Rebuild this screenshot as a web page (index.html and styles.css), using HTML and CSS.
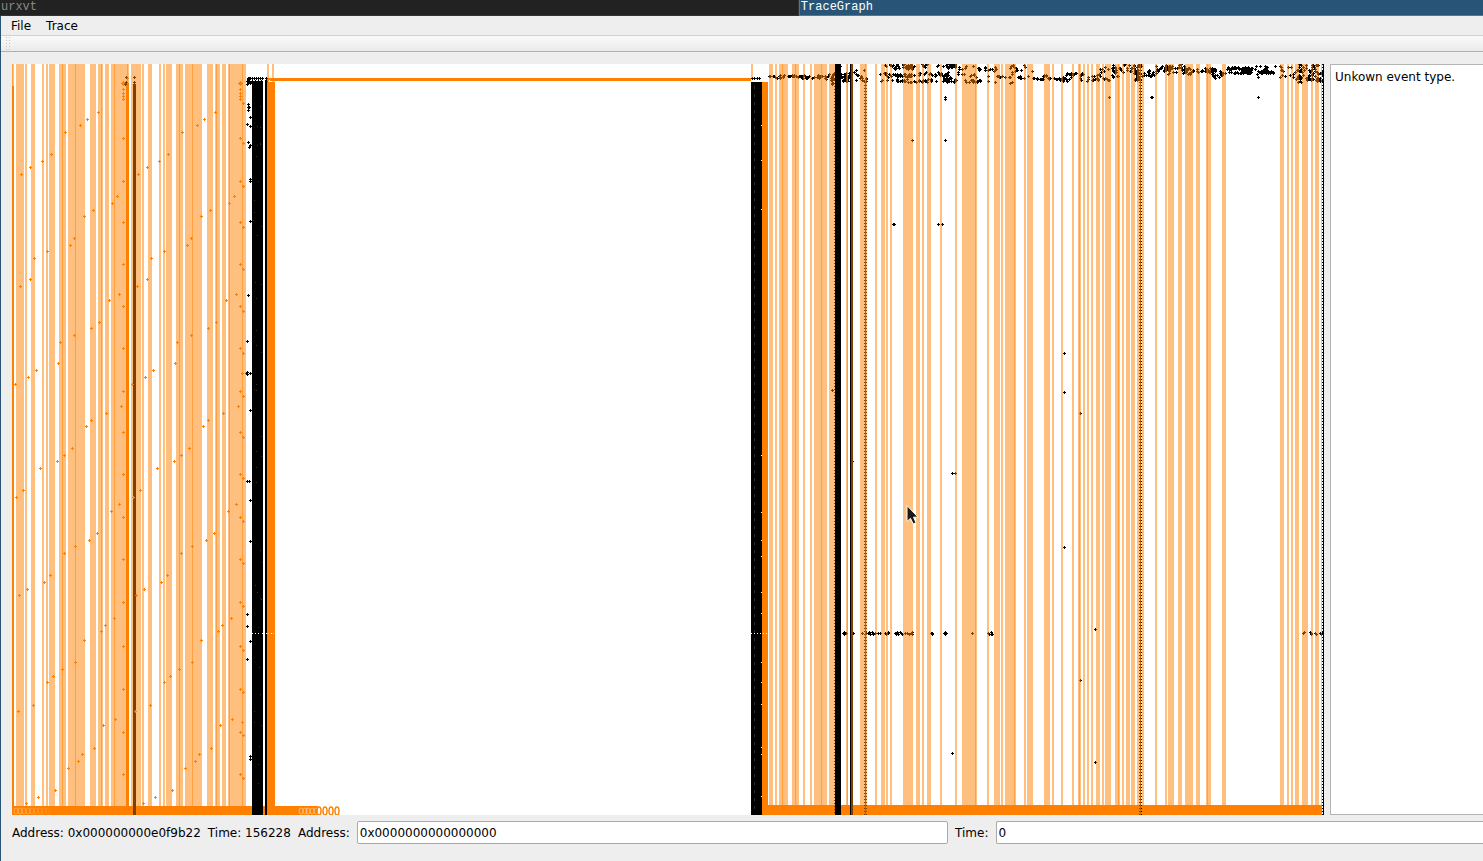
FILE: index.html
```html
<!DOCTYPE html>
<html lang="en">
<head>
<meta charset="utf-8">
<title>TraceGraph</title>
<link rel="stylesheet" href="styles.css">
</head>
<body>
<header class="tabs">
  <div class="tab">urxvt</div>
  <div class="tab tab-active">TraceGraph</div>
</header>
<div class="window">
  <nav class="menubar">
    <button class="menu" type="button">File</button>
    <button class="menu" type="button">Trace</button>
  </nav>
  <div class="toolbar"><span class="grip"></span></div>
  <main class="content">
    <svg class="plot" id="plot" viewBox="12 64 1312 751" preserveAspectRatio="none" shape-rendering="crispEdges" role="img" aria-label="Trace graph"></svg>
    <section class="events">Unkown event type.</section>
  </main>
  <footer class="status">
    <span>Address: 0x000000000e0f9b22</span>
    <span>Time: 156228</span>
    <label for="address">Address:</label>
    <input class="field field-address" id="address" type="text" value="0x0000000000000000">
    <label for="time">Time:</label>
    <input class="field field-time" id="time" type="text" value="0">
  </footer>
</div>
<script src="plot.js"></script>
</body>
</html>
```
FILE: styles.css
```css
* { box-sizing: border-box; }

body {
  margin: 0;
  height: 100vh;
  display: flex;
  flex-direction: column;
  overflow: hidden;
  background: #eeeeee;
  color: #000000;
  font: 12px/16px "DejaVu Sans", sans-serif;
}

.tabs {
  display: flex;
  flex: none;
  height: 16px;
  font: 12px/15px "Liberation Mono", monospace;
}

.tab {
  flex: 799;
  min-width: 0;
  padding-left: 1px;
  background: #222222;
  border-bottom: 1px solid #333333;
  border-right: 1px solid #333333;
  color: #888888;
}

.tab-active {
  flex: 684;
  background: #285577;
  border-left: 1px solid #4c7899;
  border-right: 0;
  border-bottom-color: #4c7899;
  color: #ffffff;
}

.window {
  flex: 1;
  min-height: 0;
  display: flex;
  flex-direction: column;
  border-left: 1px solid #285577;
}

.menubar {
  display: flex;
  flex: none;
  gap: 1px;
  height: 19px;
  padding-left: 3px;
}

.menu {
  padding: 0 7px;
  border: 0;
  background: none;
  color: inherit;
  font: inherit;
}

.toolbar {
  flex: none;
  height: 17px;
  padding: 1px 5px;
  border-top: 1px solid #d0d0d0;
  border-bottom: 1px solid #b0b0b0;
  background: linear-gradient(#f9f9f9, #ebebeb);
}

.grip {
  display: block;
  width: 5px;
  height: 14px;
  background: linear-gradient(#c4c4c4, #c4c4c4) 0 0 / 1px 100% no-repeat, linear-gradient(#c4c4c4, #c4c4c4) 3px 0 / 1px 100% no-repeat;
  -webkit-mask: repeating-linear-gradient(#000000 0 1px, transparent 1px 3px);
  mask: repeating-linear-gradient(#000000 0 1px, transparent 1px 3px);
}

.content {
  flex: 1;
  min-height: 0;
  display: flex;
  gap: 6px;
  padding: 12px 0 0 11px;
}

.plot {
  flex: 1;
  min-width: 0;
  height: 100%;
  display: block;
  background: #ffffff;
}

.events {
  flex: none;
  width: 153px;
  padding: 4px;
  border: 1px solid #b4b4b4;
  border-right: 0;
  background: #ffffff;
}

.status {
  flex: none;
  display: flex;
  align-items: center;
  gap: 7px;
  padding: 6px 0 17px 11px;
  white-space: nowrap;
}

.field {
  min-width: 0;
  height: 23px;
  padding: 0 2px;
  border: 1px solid #aaaaaa;
  border-radius: 2px;
  background: #ffffff;
  color: inherit;
  font: inherit;
}

.field-address { flex: 592; }

.field-time {
  flex: 488;
  border-right: 0;
  border-radius: 2px 0 0 2px;
}
```
FILE: plot.js
```js
const svg = document.getElementById("plot");
const TOP = 64, BOTTOM = 815;

function add(name, attrs) {
  const el = document.createElementNS("http://www.w3.org/2000/svg", name);
  for (const key in attrs) el.setAttribute(key, attrs[key]);
  svg.appendChild(el);
}
function bars(list, fill, opacity) {
  const d = list.map(([a, b, y0 = TOP, y1 = BOTTOM]) => `M${a},${y0}H${b}V${y1}H${a}z`).join("");
  add("path", { d, fill, "fill-opacity": opacity || 1 });
}
function marks(list, fill) {
  add("path", { fill, "fill-rule": "nonzero", d: list.map(([x, y]) => `M${x - 1},${y}h3v1h-3zM${x},${y - 1}h1v3h-1z`).join("") });
}
const column = (x, y0, y1, step) => {
  const out = [];
  for (let y = y0; y < y1; y += step) out.push([x, y]);
  return out;
};
let seed = 7;
const random = () => (seed = (seed * 16807) % 2147483647) / 2147483647;
const scatter = (x0, x1, y0, y1, n) => {
  const out = [];
  for (let i = 0; i < n; i++) out.push([Math.round(x0 + random() * (x1 - x0)), Math.round(y0 + random() * (y1 - y0))]);
  return out;
};
const pairs = text => text.trim().split(/\s+/).map(p => p.split(",").map(Number));

/* memory accesses that repeat once per loop pass */
const loop = pairs(`21,174 30,167 42,161 51,154 65,132 80,125 87,119 98,112 117,196 112,203 93,210 84,216
74,238 70,245 47,251 34,258 30,279 20,286 119,294 109,300 99,322 91,328 74,335 60,342 58,363 36,370 28,377 15,384
121,406 106,413 91,420 86,426 72,448 64,455 57,461 40,468 23,490 16,497 119,504 111,511 97,533 89,540 75,546 64,553
50,575 44,582 27,589 19,595 114,618 105,625 101,631 84,640 75,662 62,669 53,676 47,682 33,705 18,711 115,719 103,725
94,748 82,754 78,761 68,768 55,790 38,797 26,803
123,82 122,83 123,84 124,83 123,89 123,93 123,96 123,99 123,138 123,181 123,222 123,264 123,306 123,348 123,391
123,432 123,474 123,517 123,559 123,602 123,646 123,689 123,732 123,774`);
const secondPass = loop.map(([x, y]) => [x + 117, y]);
const edge = pairs(`243,103 243,143 243,186 243,227 243,269 243,311 243,353 243,396 243,437 243,478 243,521 243,563
243,606 243,650 243,692 243,735 243,778 242,373 242,722 127,78`);

/* solid columns */
bars([[12, 14, 86], [126, 129, 83], [267, 275, 82], [762, 768, 82], [267, 751, 78, 81], [12, 300, 806], [762, 1322, 805]], "#ff8000");
bars([[133, 136, 84], [252, 263, 82], [265, 267, 80], [751, 762, 82], [835, 841], [850, 853]], "#000000");
marks(loop.concat(secondPass, edge), "#ff8000");

/* single black events */
marks(pairs(`126,77 126,82 125,84 134,77 134,82 248,104 248,107 249,107 248,110 250,117 247,124 250,126 248,142 250,145 249,147
250,179 250,181 250,221 248,295 247,341 246,373 247,372 247,374 250,373 250,410 247,481 249,481 250,500 250,541
247,614 247,626 250,641 247,659 250,756 250,759 945,97 945,99 912,140 945,140 893,224 894,224 938,224 942,224
1109,97 1152,97 1151,97 1258,97 1064,353 1064,392 1080,413 952,473 955,473 1064,547 1095,629 1080,680 1095,762
952,753 832,390 852,461
843,633 844,632 844,634 846,633 853,633 862,633 866,633 868,633 869,632 870,634 872,632 873,634 875,633 878,633 880,633
885,633 886,634 888,632 888,633 895,633 896,634 897,632 898,634 900,632 901,633 902,634 905,633 907,633 909,634 911,633 912,632 912,634
931,633 932,633 932,634 944,633 945,632 945,634 946,633 972,633 988,633 989,634 991,632 991,634 992,634
1303,633 1304,632 1310,632 1311,633 1311,634 1315,633 1316,634 1320,633 1321,634 1322,633 1323,634`)
.concat(
  column(865, 82, 815, 3), column(1140, 64, 815, 3), column(1323, 64, 815, 3), column(835, 80, 815, 3),
  scatter(247, 250, 78, 84, 14), column(0, 0, 1, 1), [248, 250, 252, 254, 256, 258, 260, 262, 266].map(x => [x, 78]),
  [252, 255, 258, 261, 266].map(x => [x, 81]),
  [752, 754, 757, 759].map(x => [x, 78]),
  scatter(768, 781, 75, 78, 13), scatter(781, 802, 75, 77, 17), scatter(802, 828, 75, 78, 22), scatter(825, 834, 74, 79, 9),
  scatter(832, 850, 73, 81, 50), scatter(831, 834, 80, 84, 5), scatter(850, 867, 69, 81, 16), scatter(833, 841, 64, 67, 4),
  scatter(885, 915, 64, 68, 25), scatter(920, 957, 64, 67, 25), scatter(895, 917, 66, 69, 14), scatter(943, 955, 66, 68, 7),
  scatter(878, 916, 73, 77, 38), scatter(916, 948, 72, 76, 24), scatter(879, 920, 79, 82, 25), scatter(921, 957, 79, 82, 26),
  scatter(943, 951, 74, 82, 10), scatter(957, 976, 66, 78, 14), scatter(961, 982, 79, 82, 14),
  scatter(978, 996, 67, 71, 14), [[976, 77], [988, 76], [988, 81], [995, 82], [996, 69]],
  scatter(996, 1012, 76, 77, 10), scatter(1010, 1025, 64, 84, 20), [[1032, 71], [1028, 76]],
  scatter(1033, 1043, 77, 80, 9), scatter(1043, 1050, 74, 77, 6), scatter(1048, 1065, 78, 80, 24), scatter(1063, 1072, 73, 82, 11),
  scatter(1065, 1084, 73, 75, 13), scatter(1078, 1100, 74, 81, 19), scatter(1100, 1120, 66, 80, 27), scatter(1112, 1138, 64, 72, 32),
  scatter(1134, 1142, 64, 82, 25), scatter(1143, 1156, 70, 76, 17), scatter(1156, 1172, 65, 71, 34), scatter(1168, 1190, 64, 74, 28),
  scatter(1183, 1213, 68, 72, 40), scatter(1212, 1225, 69, 78, 22), scatter(1220, 1227, 72, 73, 5),
  scatter(1227, 1252, 67, 69, 45), scatter(1229, 1251, 72, 73, 22), scatter(1240, 1252, 68, 73, 30),
  scatter(1254, 1268, 65, 74, 20), scatter(1261, 1273, 71, 73, 18), [[1258, 77], [1275, 66], [1280, 66], [1281, 70], [1285, 76]],
  scatter(1280, 1300, 65, 80, 16), scatter(1298, 1302, 64, 83, 20), scatter(1303, 1323, 64, 82, 50)
), "#000000");

/* light speckles inside the dense columns */
bars([250, 253, 256, 259, 262, 269, 753, 757, 760, 764, 767].map(x => [x, x + 1, 80, 81]), "#ffffff");
bars([252, 255, 258, 262, 263, 266, 268, 271, 273, 751, 754, 757, 760, 763, 766].map(x => [x, x + 1, 633, 634]), "#ffffff");
bars([125, 160, 209, 455, 512, 540, 556, 592, 613, 662, 682, 704, 747, 754, 796].map(y => [761, 762, y, y + 1]), "#ffffff");
bars(column(754, 86, 812, 8).map(([x, y]) => [x, x + 1, y, y + 3]), "#252a28");
bars(scatter(253, 262, 90, 800, 42).map(([x, y]) => [x, x + 1, y, y + 1]), "#333333");

/* translucent selections; overlaps read darker */
const stripes = [[12, 14], [16, 24], [25, 27], [31, 35], [42, 44], [46, 48], [49, 55], [59, 66], [68, 85], [90, 96], [98, 103],
  [105, 109], [111, 129], [131, 141], [142, 144], [148, 152], [159, 161], [163, 165], [166, 172], [176, 183], [185, 202],
  [207, 213], [215, 220], [222, 226], [228, 246], [267, 269], [272, 274], [751, 753, 64, 78], [769, 773], [775, 777], [779, 788],
  [792, 799], [803, 805], [810, 812], [814, 827], [829, 835], [846, 848], [851, 853], [860, 867], [875, 877], [881, 885],
  [886, 888], [890, 892], [903, 913], [916, 920], [922, 924], [927, 931], [940, 942], [955, 957], [962, 977], [987, 989],
  [994, 1000], [1001, 1003], [1005, 1016], [1024, 1026], [1027, 1033], [1044, 1050], [1052, 1054], [1061, 1063], [1072, 1074],
  [1078, 1081], [1083, 1085], [1087, 1089], [1091, 1093], [1096, 1100], [1102, 1104], [1105, 1111], [1115, 1120], [1122, 1124],
  [1126, 1130], [1131, 1135], [1137, 1141], [1142, 1144], [1155, 1157], [1165, 1167], [1168, 1174], [1178, 1182], [1185, 1193],
  [1196, 1200], [1206, 1211], [1222, 1226], [1280, 1284], [1287, 1289], [1291, 1293], [1295, 1299], [1302, 1308], [1311, 1313],
  [1315, 1319], [1321, 1322]];
bars(stripes, "#ff8000", 0.5);
bars([12, 62, 75, 101, 114, 127, 179, 192, 216, 229, 242, 782, 795, 821, 847, 865, 975, 1014, 1079, 1118, 1140, 1207]
  .map(x => [x, x + 1]), "#ff8000", 0.5);

/* overlapping round markers along the baseline */
for (let x = 16; x < 50; x += 4) add("ellipse", { cx: x, cy: 811, rx: 2, ry: 3, fill: "none", stroke: "#ffc080", "stroke-opacity": (56 - x) / 60, "shape-rendering": "auto" });
bars([[300, 318, 806]], "#ff8000");
for (const x of [301, 305, 308, 312, 316]) add("ellipse", { cx: x, cy: 811, rx: 2, ry: 3, fill: "none", stroke: "#ffd0a0", "stroke-opacity": 0.7, "shape-rendering": "auto" });
for (const x of [319, 325, 331, 337]) add("ellipse", { cx: x, cy: 811, rx: 2, ry: 4, fill: "#ffffff", stroke: "#ff8000", "stroke-width": 1.5, "shape-rendering": "auto" });

/* pointer */
add("path", { d: "M907,505.500V521.500L910.500,518.300L913.200,524L916,522.700L913.500,517.200H918z", fill: "#1a1a1a", stroke: "#ffffff", "stroke-width": 1, "shape-rendering": "auto" });
```
